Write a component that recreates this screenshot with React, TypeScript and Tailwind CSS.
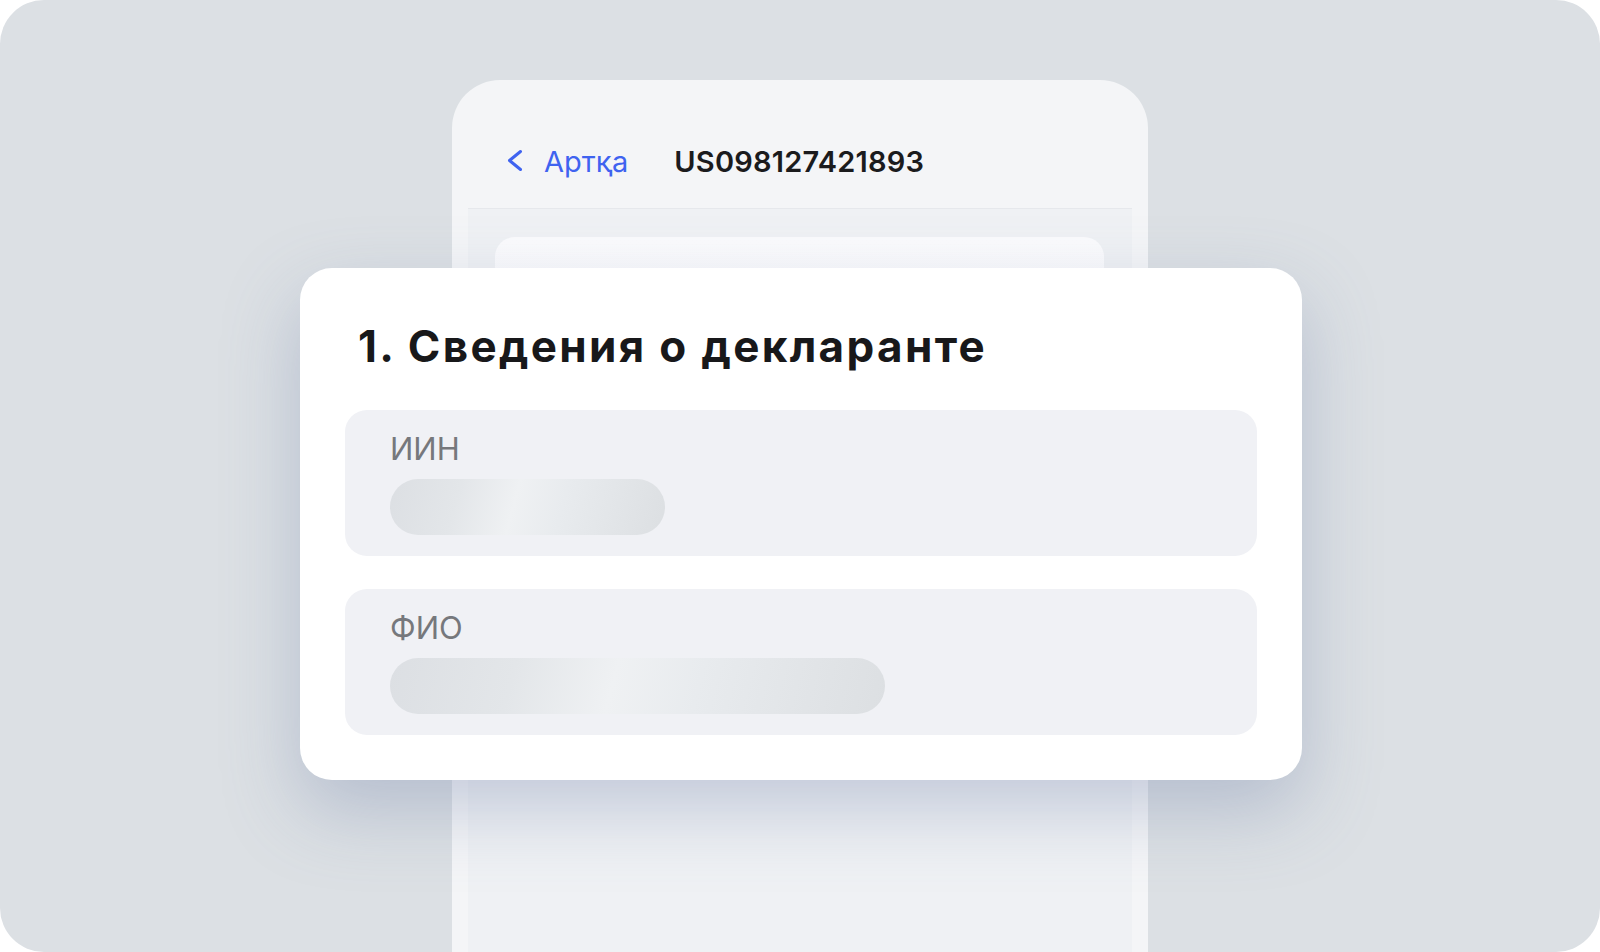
import React from "react";

const font = { fontFamily: "Inter, 'Noto Sans', sans-serif" };

function Field({ label, pillWidth }: { label: string; pillWidth: string }) {
  return (
    <div className="h-[146px] rounded-[22px] bg-[#f0f1f5] pl-[45px] pt-[23px] flex flex-col">
      <div className="text-[31px] leading-none text-[#76787c] h-[31px]">{label}</div>
      <div
        className={`mt-[15px] h-[56px] rounded-full bg-[linear-gradient(105deg,#dcdfe3_0%,#e3e6e9_25%,#eff1f3_45%,#e8ebee_62%,#dcdfe2_100%)] ${pillWidth}`}
      />
    </div>
  );
}

export default function App() {
  return (
    <div className="w-[1600px] h-[952px] bg-white" style={font}>
      <div className="relative w-full h-full overflow-hidden rounded-[44px] bg-[#dce0e4] pt-[80px] flex justify-center">
        {/* Phone */}
        <div className="w-[696px] h-[900px] shrink-0 rounded-t-[48px] bg-[#f4f5f7] px-4 flex flex-col">
          <div className="h-[128px] shrink-0 pt-[34px] pl-[40px] flex items-center">
            <svg width="16" height="24" viewBox="0 0 16 24" className="shrink-0 -ml-[1px]">
              <polyline
                points="13.5,2.5 2.5,11.5 13.5,20.5"
                fill="none"
                stroke="#3f63f0"
                strokeWidth="3"
                strokeLinecap="round"
                strokeLinejoin="round"
              />
            </svg>
            <span className="ml-[21px] text-[29px] leading-none text-[#3f63f0]">Артқа</span>
            <span className="ml-[46px] text-[29px] leading-none font-semibold text-[#1b1b1d] tracking-[0.2px]">US098127421893</span>
          </div>
          <div className="flex-1 border-t border-[#e6e8ec] bg-[#eff1f4] pt-[28px] pl-[27px] pr-[28px]">
            <div className="h-[400px] rounded-[20px] bg-[linear-gradient(180deg,#fbfbfd_0%,#f2f4f7_100%)]" />
          </div>
        </div>

        {/* Overlay card */}
        <div className="absolute left-[300px] top-[268px] w-[1002px] rounded-[32px] bg-white pt-[56px] px-[45px] pb-[45px] shadow-[0_30px_75px_rgba(105,122,165,0.34)]">
          <h1 className="pl-[13px] text-[44px] leading-none font-bold text-[#18181a] tracking-[2.35px] whitespace-nowrap">
            1. Сведения о декларанте
          </h1>
          <div className="mt-[42px] flex flex-col gap-[33px]">
            <Field label="ИИН" pillWidth="w-[275px]" />
            <Field label="ФИО" pillWidth="w-[495px]" />
          </div>
        </div>
      </div>
    </div>
  );
}
